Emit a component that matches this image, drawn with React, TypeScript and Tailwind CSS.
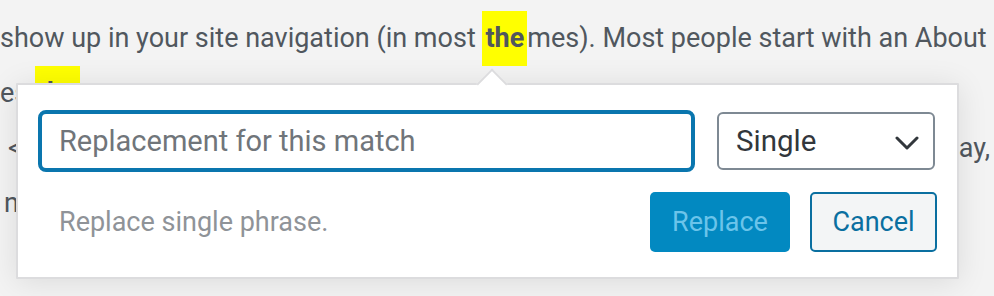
import React from "react";

const font = { fontFamily: "Roboto, 'Noto Sans', sans-serif" };

function Highlight({ children }: { children: React.ReactNode }) {
  return (
    <span className="inline-block bg-[#ffff00] px-[3px] font-bold leading-[55px]">
      {children}
    </span>
  );
}

function Chevron() {
  return (
    <svg width="24" height="14" viewBox="0 0 24 14" fill="none" className="mt-[4px]">
      <path
        d="M2 2 L12 12 L22 2"
        stroke="#32373c"
        strokeWidth="3"
        strokeLinecap="round"
        strokeLinejoin="round"
      />
    </svg>
  );
}

function ReplacePopover() {
  return (
    <div className="absolute left-[16px] top-[83px] w-[943px] rounded-[1px] border-2 border-[#dcdcde] bg-white px-[20px] pt-[25px] pb-[25px] shadow-[0_3px_30px_rgba(0,0,0,0.1)]">
      {/* arrow */}
      <div className="absolute -top-[12px] left-[463px] h-[22px] w-[22px] rotate-45 border-l-2 border-t-2 border-[#dcdcde] bg-white" />
      <div className="relative flex items-center gap-[22px]">
        <div className="flex h-[62px] w-[657px] items-center rounded-[8px] border-[4px] border-[#0a76ae] px-[17px]">
          <span className="text-[29px] text-[#70757a]">Replacement for this match</span>
        </div>
        <div className="flex h-[58px] w-[218px] items-center justify-between rounded-[6px] border-2 border-[#7e8993] pl-[17px] pr-[14px]">
          <span className="text-[29.5px] text-[#32373c]">Single</span>
          <Chevron />
        </div>
      </div>
      <div className="relative mt-[20px] flex items-center">
        <span className="pl-[21px] text-[27px] text-[#8f9398]">Replace single phrase.</span>
        <div className="ml-auto flex gap-[20px]">
          <button
            type="button"
            className="h-[60px] w-[140px] rounded-[5px] bg-[#0289c1] text-[27px] text-[#6bc4ea]"
          >
            Replace
          </button>
          <button
            type="button"
            className="h-[60px] w-[127px] rounded-[5px] border-2 border-[#0a6fa0] bg-[#f3f5f6] text-[27px] text-[#0a6fa0]"
          >
            Cancel
          </button>
        </div>
      </div>
    </div>
  );
}

export default function App() {
  return (
    <div
      className="relative h-[296px] w-[994px] overflow-hidden bg-[#f3f3f3] pt-[11px] text-[27px] leading-[55px] text-[#50575e]"
      style={font}
    >
      <div className="whitespace-nowrap">
        show up in your site navigation (in most <Highlight>the</Highlight>mes). Most
        people start with an About
      </div>
      <div className="whitespace-nowrap">
        es <Highlight>the</Highlight> page
      </div>
      <div className="flex justify-between whitespace-nowrap pl-[8px]">
        <span>&lt;</span>
        <span className="pr-[4px]">ay,</span>
      </div>
      <div className="whitespace-nowrap pl-[4px]">n</div>
      <ReplacePopover />
    </div>
  );
}
